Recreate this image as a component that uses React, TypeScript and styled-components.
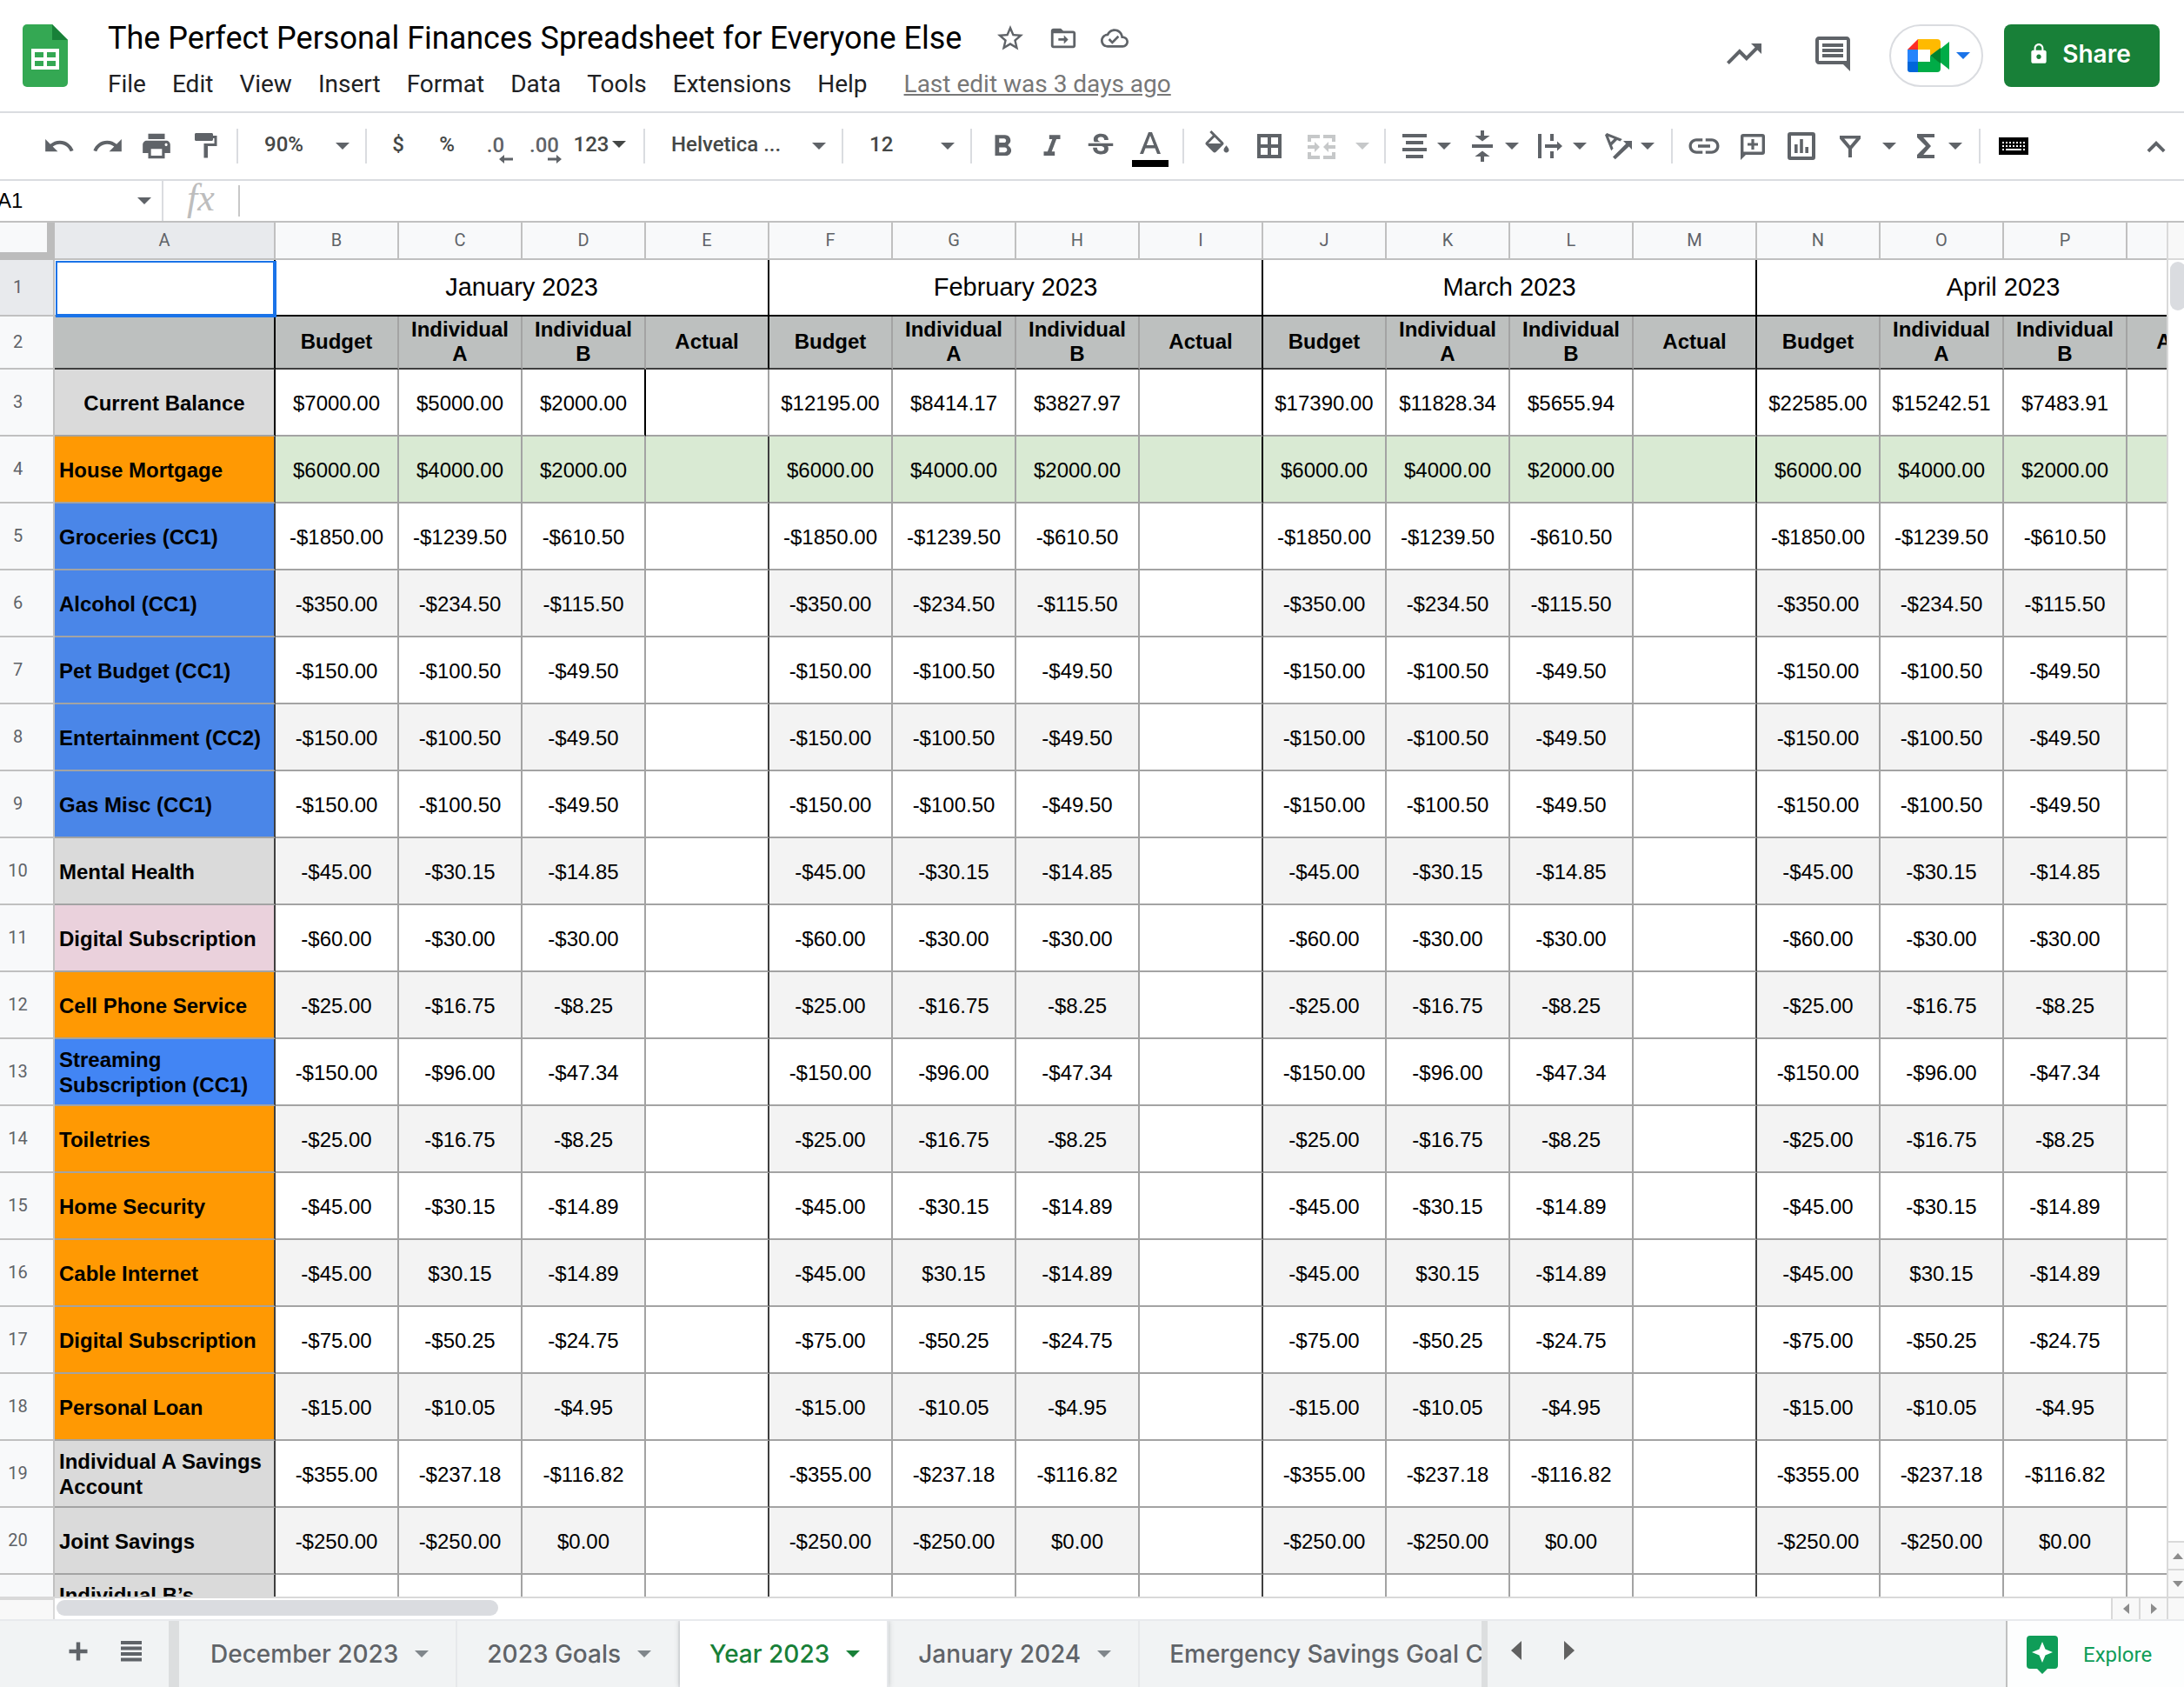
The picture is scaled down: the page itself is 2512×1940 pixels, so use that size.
import React from 'react';
import styled, { createGlobalStyle, css } from 'styled-components';

const sans = '"Liberation Sans", Arial, sans-serif';
const ui = 'Roboto, "Liberation Sans", sans-serif';
const display = 'Inter, Roboto, sans-serif';
const ink = '#5f6368';
const line = '#a3a3a3';
const headLine = '#c0c0c0';
const softLine = '#d9d9d9';

const GlobalStyle = createGlobalStyle`
  *, *::before, *::after { box-sizing: border-box; }
  body { margin: 0; background: #fff; color: #000; font-family: ${ui}; }
  button, input, select { font: inherit; color: inherit; border: 0; padding: 0; margin: 0; background: none; }
  svg { display: block; flex: none; }
`;

const Page = styled.div`
  display: flex;
  flex-direction: column;
  height: 100vh;
  overflow: hidden;
`;

/* ---------- header ---------- */

const Header = styled.header`
  display: flex;
  align-items: flex-start;
  height: 130px;
  padding: 0 28px 0 26px;
  border-bottom: 2px solid #dadce0;
`;

const LogoLink = styled.a`
  flex: none;
  margin-top: 28px;
`;

const Titles = styled.div`
  flex: 1;
  min-width: 0;
  padding: 22px 0 0 46px;
`;

const TitleRow = styled.div`
  display: flex;
  align-items: center;
  height: 44px;
`;

const Title = styled.h1`
  margin: 0;
  font: 400 36px/44px ${ui};
  white-space: nowrap;
`;

const TitleIcons = styled.div`
  display: flex;
  gap: 26px;
  margin-left: 38px;
  color: ${ink};
`;

const IconButton = styled.button`
  display: flex;
  align-items: center;
  justify-content: center;
  color: ${ink};
`;

const MenuBar = styled.nav`
  display: flex;
  align-items: center;
  gap: 30px;
  height: 40px;
  margin-top: 11px;
  font-size: 28px;
  line-height: 40px;
  color: #202124;
  white-space: nowrap;
`;

const LastEdit = styled.a`
  margin-left: 12px;
  color: #777;
  text-decoration: underline;
`;

const HeaderActions = styled.div`
  display: flex;
  align-items: center;
  height: 72px;
  margin-top: 28px;
`;

const ActionIcon = styled(IconButton)`
  width: 48px;
  height: 48px;
  margin: 0 54px 4px 0;

  & + & { margin-right: 41px; }
`;

const MeetButton = styled.button`
  display: flex;
  align-items: center;
  justify-content: center;
  gap: 8px;
  width: 108px;
  height: 72px;
  margin-right: 24px;
  padding-left: 6px;
  border: 2px solid #dadce0;
  border-radius: 36px;
  color: #1a73e8;
`;

const ShareButton = styled.button`
  display: flex;
  align-items: center;
  justify-content: center;
  gap: 14px;
  width: 179px;
  height: 72px;
  padding: 0 6px 4px 0;
  border-radius: 8px;
  background: #188038;
  color: #fff;
  font: 600 28px/36px ${display};
`;

/* ---------- toolbar ---------- */

const Toolbar = styled.div`
  display: flex;
  align-items: center;
  height: 78px;
  padding: 0 4px 0 40px;
  border-bottom: 2px solid #dadce0;
  color: ${ink};
`;

const Tool = styled(IconButton)<{ $w?: number; $push?: boolean; $dim?: boolean }>`
  flex: none;
  width: ${(p) => p.$w ?? 56}px;
  height: 56px;
  font: 500 24px/28px ${ui};
  ${(p) => p.$push && css`margin-left: auto;`}
  ${(p) => p.$dim && css`opacity: 0.35;`}
`;

const TextTool = styled(Tool)`
  gap: 4px;
  padding-bottom: 4px;
  color: #444746;
`;

const FormatTool = styled(TextTool)`
  padding-right: 6px;
`;

const DecimalTool = styled(Tool)`
  flex-direction: column;
  color: ${ink};
  line-height: 22px;
  padding-top: 8px;

  svg { align-self: flex-end; margin-right: 8px; }
`;

const GroupTool = styled.button<{ $gap?: number }>`
  display: flex;
  flex: none;
  align-items: center;
  gap: ${(p) => p.$gap ?? 8}px;
  width: 78px;
  height: 56px;
  padding-left: 7px;
  color: ${ink};
`;

const Divider = styled.span`
  flex: none;
  width: 2px;
  height: 40px;
  margin: 0 8px;
  background: #dadce0;
`;

const Picker = styled.label<{ $w: number }>`
  display: flex;
  flex: none;
  align-items: center;
  width: ${(p) => p.$w}px;
  height: 56px;
  padding: 0 10px 0 22px;

  select {
    flex: 1;
    min-width: 0;
    height: 36px;
    margin-bottom: 4px;
    appearance: none;
    font: 500 24px/36px ${ui};
    color: #444746;
  }
`;

/* ---------- formula bar ---------- */

const FormulaBar = styled.div`
  display: flex;
  align-items: center;
  height: 48px;
  border-bottom: 2px solid ${headLine};
`;

const NameBox = styled.label`
  display: flex;
  align-items: center;
  width: 188px;
  height: 46px;
  padding-right: 12px;
  border-right: 2px solid #dadce0;
  color: ${ink};

  input {
    flex: 1;
    min-width: 0;
    text-indent: -3px;
    font: 400 24px/28px ${sans};
    color: #000;
  }
`;

const Fx = styled.span`
  width: 88px;
  padding-bottom: 6px;
  border-right: 2px solid #c8c8c8;
  font: italic 400 44px/30px "Liberation Serif", serif;
  text-align: center;
  color: #bdbdbd;
`;

const FormulaInput = styled.input`
  flex: 1;
  height: 40px;
  outline: 0;
  font: 400 24px/28px ${sans};
`;

/* ---------- grid ---------- */

const Workspace = styled.main`
  display: grid;
  grid-template-columns: minmax(0, 1fr) 20px;
  grid-template-rows: minmax(0, 1fr) 26px;
  flex: 1;
  min-height: 0;
`;

const Viewport = styled.div`
  overflow: hidden;
`;

const Sheet = styled.table`
  width: 2588px;
  table-layout: fixed;
  border-collapse: separate;
  border-spacing: 0;
  font-family: ${sans};
`;

const Corner = styled.td`
  padding: 0;
  height: 43px;
  background: #f8f9fa;
  border-right: 9px solid #bcbcbc;
  border-bottom: 9px solid #bcbcbc;
`;

const ColHead = styled.th<{ $on?: boolean }>`
  height: 43px;
  padding: 0 0 2px;
  border-right: 2px solid ${headLine};
  border-bottom: 2px solid ${headLine};
  background: ${(p) => (p.$on ? '#e8eaed' : '#f8f9fa')};
  color: ${ink};
  font: 400 20px/24px ${ui};
`;

const RowHead = styled.th<{ $on?: boolean }>`
  padding: 0 20px 2px 0;
  border-right: 2px solid ${headLine};
  border-bottom: 2px solid ${headLine};
  background: ${(p) => (p.$on ? '#e8eaed' : '#f8f9fa')};
  color: ${ink};
  font: 400 20px/24px ${ui};
`;

const Row = styled.tr<{ $h: number }>`
  height: ${(p) => p.$h}px;
`;

const Cell = styled.td<{ $bg?: string; $right?: string; $bottom?: string }>`
  padding: 2px 0 0;
  border-right: 2px solid ${(p) => p.$right ?? line};
  border-bottom: 2px solid ${(p) => p.$bottom ?? line};
  background: ${(p) => p.$bg ?? '#fff'};
  font-size: 24px;
  line-height: 29px;
  text-align: center;
  white-space: nowrap;
`;

const MonthCell = styled(Cell)`
  padding: 0 0 2px;
  font-size: 29px;
  line-height: 34px;
`;

const HeadCell = styled(Cell)`
  padding: 0 12px 1px;
  font-weight: 700;
  line-height: 28px;
  white-space: normal;
`;

const LabelCell = styled(Cell)<{ $center?: boolean }>`
  padding: 1px 5px 0;
  font-weight: 700;
  text-align: ${(p) => (p.$center ? 'center' : 'left')};
  white-space: normal;
`;

const ClippedLabel = styled(LabelCell)`
  padding-top: 9px;
  vertical-align: top;
`;

const ActiveCell = styled(Cell)`
  position: relative;

  &::after {
    content: '';
    position: absolute;
    inset: 1px -3px -3px 1px;
    border: solid #1a73e8;
    border-width: 2px 4px 4px 2px;
    z-index: 1;
  }
`;

/* ---------- scroll bars ---------- */

const VScroll = styled.div`
  display: flex;
  flex-direction: column;
  border-left: 2px solid ${softLine};
  overflow: hidden;
`;

const VHead = styled.div`
  flex: none;
  height: 43px;
  background: #f8f8f8;
  border-bottom: 2px solid ${softLine};
`;

const VTrack = styled.div`
  flex: 1;
  padding: 2px 0 0 2px;
`;

const VThumb = styled.div`
  width: 18px;
  height: 56px;
  border-radius: 9px;
  background: #dadce0;
`;

const StepButton = styled.button<{ $side?: boolean }>`
  display: flex;
  flex: none;
  align-items: center;
  justify-content: center;
  width: ${(p) => (p.$side ? '32px' : '100%')};
  height: ${(p) => (p.$side ? '100%' : '32px')};
  padding-left: ${(p) => (p.$side ? 0 : 4)}px;
  border: solid ${softLine};
  border-width: ${(p) => (p.$side ? '0 0 0 2px' : '2px 0 0')};
  background: #f8f8f8;
  color: #8c8c8c;
`;

const HScroll = styled.div`
  display: flex;
  border-top: 2px solid ${softLine};
`;

const HCorner = styled.div`
  flex: none;
  width: 63px;
  border-top: 2px solid ${softLine};
  border-right: 2px solid ${softLine};
  background: #f8f8f8;
`;

const HTrack = styled.div`
  flex: 1;
  padding: 2px;
`;

const HThumb = styled.div`
  width: 508px;
  height: 18px;
  border-radius: 9px;
  background: #dadce0;
`;

const ScrollCorner = styled.div`
  border: solid ${softLine};
  border-width: 2px 0 0 2px;
  background: #f8f8f8;
`;

/* ---------- sheet tabs ---------- */

const TabBar = styled.footer`
  display: flex;
  height: 78px;
  border-top: 2px solid #e8eaed;
  background: #f1f3f4;
`;

const TabTools = styled.div`
  display: flex;
  flex: none;
  align-items: center;
  gap: 31px;
  width: 194px;
  padding: 0 0 6px 72px;
`;

const Tabs = styled.div`
  display: flex;
  flex: none;
  width: 1517px;
  padding-left: 2px;
  overflow: hidden;
  border: solid #dcdedf;
  border-width: 0 7px 0 12px;
`;

const Tab = styled.button<{ $on?: boolean }>`
  display: flex;
  flex: none;
  align-items: center;
  gap: 19px;
  padding: 0 31px 0 34px;
  border-right: 2px solid #e6e8eb;
  font: 500 28px/36px ${display};
  white-space: nowrap;
  color: ${(p) => (p.$on ? '#188038' : ink)};
  background: ${(p) => (p.$on ? '#fff' : 'transparent')};
  ${(p) => p.$on && css`box-shadow: 0 0 6px rgba(60, 64, 67, 0.3);`}

  svg { color: ${(p) => (p.$on ? '#188038' : '#80868b')}; }
`;

const TabArrows = styled.div`
  display: flex;
  flex: 1;
  align-items: center;
  gap: 49px;
  padding: 0 0 8px 27px;

  button { color: #616161; }
`;

const Explore = styled.button`
  display: flex;
  flex: none;
  align-items: center;
  gap: 29px;
  width: 205px;
  padding: 2px 0 0 22px;
  border-left: 2px solid ${headLine};
  background: #fdfefe;
  color: #0f9d58;
  font: 400 24px/28px ${ui};
`;

/* ---------- icons ---------- */

const Icon = ({ d, size = 36, grid = 24 }: { d: string; size?: number; grid?: number }) => (
  <svg width={size} height={size} viewBox={`0 0 ${grid} ${grid}`} fill="currentColor" aria-hidden="true">
    <path d={d} fillRule="evenodd" />
  </svg>
);

const Caret = () => (
  <svg width="16" height="8" viewBox="0 0 16 8" fill="currentColor" aria-hidden="true">
    <path d="M0 0h16L8 8z" />
  </svg>
);

const paths = {
  star: 'M22 9.24l-7.19-.62L12 2 9.19 8.63 2 9.24l5.46 4.73L5.82 21 12 17.27 18.18 21l-1.63-7.03L22 9.24zM12 15.4l-3.76 2.27 1-4.28-3.32-2.88 4.38-.38L12 6.1l1.71 4.04 4.38.38-3.32 2.88 1 4.28L12 15.4z',
  folder: 'M20 6h-8l-2-2H4c-1.1 0-2 .9-2 2v12c0 1.100.9 2 2 2h16c1.100 0 2-.9 2-2V8c0-1.100-.9-2-2-2zm0 12H4V8h16v10zM12.500 9.500l3.500 3.500-3.500 3.500v-2.500H8v-2h4.500z',
  cloud: 'M19.350 10.040C18.670 6.590 15.640 4 12 4 9.110 4 6.600 5.640 5.350 8.040 2.340 8.360 0 10.910 0 14c0 3.310 2.690 6 6 6h13c2.760 0 5-2.240 5-5 0-2.640-2.050-4.780-4.650-4.960zM19 18H6c-2.210 0-4-1.790-4-4 0-2.050 1.530-3.760 3.560-3.970l1.070-.11.5-.95C8.080 7.140 9.940 6 12 6c2.620 0 4.880 1.860 5.390 4.430l.3 1.500 1.530.11c1.560.1 2.780 1.410 2.780 2.960 0 1.650-1.350 3-3 3zm-9-3.820l-2.090-2.090L6.500 13.500 10 17l6.010-6.010-1.410-1.410z',
  trend: 'M16 6l2.290 2.290-4.880 4.880-4-4L2 16.590 3.410 18l6-6 4 4 6.300-6.290L22 12V6z',
  comment: 'M21.990 4c0-1.100-.89-2-1.990-2H4c-1.100 0-2 .9-2 2v12c0 1.100.9 2 2 2h14l4 4-.01-18zM20 4v12H4V4h16zM6 12h12v2H6zM6 9h12v2H6zM6 6h12v2H6z',
  lock: 'M18 8h-1V6c0-2.760-2.240-5-5-5S7 3.240 7 6v2H6c-1.100 0-2 .9-2 2v10c0 1.100.9 2 2 2h12c1.100 0 2-.9 2-2V10c0-1.100-.9-2-2-2zm-6 9.500c-1.400 0-2.500-1.100-2.500-2.500s1.100-2.500 2.500-2.500 2.500 1.100 2.500 2.500-1.100 2.500-2.500 2.500zM15.100 8H8.900V6c0-1.710 1.390-3.100 3.100-3.100s3.100 1.390 3.100 3.100v2z',
  undo: 'M12.500 8c-2.650 0-5.050.99-6.900 2.600L2 7v9h9l-3.620-3.620c1.390-1.160 3.160-1.880 5.120-1.880 3.540 0 6.550 2.310 7.600 5.500l2.370-.78C21.080 11.030 17.150 8 12.500 8z',
  redo: 'M18.400 10.600C16.550 8.990 14.150 8 11.500 8c-4.650 0-8.580 3.030-9.960 7.220L3.900 16c1.050-3.190 4.050-5.500 7.600-5.500 1.950 0 3.730.72 5.120 1.880L13 16h9V7l-3.600 3.600z',
  print: 'M19 8H5c-1.660 0-3 1.340-3 3v6h4v4h12v-4h4v-6c0-1.660-1.340-3-3-3zm-3 11H8v-5h8v5zm3-7c-.55 0-1-.45-1-1s.45-1 1-1 1 .45 1 1-.45 1-1 1zm-1-9H6v4h12V3z',
  paint: 'M18 4V3c0-.55-.45-1-1-1H5c-.55 0-1 .45-1 1v4c0 .55.45 1 1 1h12c.55 0 1-.45 1-1V6h1v4h-8v11h3v-9h7V4h-3z',
  bold: 'M15.600 10.790c.97-.67 1.650-1.770 1.650-2.790 0-2.260-1.750-4-4-4H6v15h8.040c2.090 0 3.710-1.700 3.710-3.790 0-1.520-.86-2.820-2.150-3.420zM9 6.500h3.500c.83 0 1.500.67 1.500 1.500s-.67 1.500-1.500 1.500H9v-3zm4 10H9v-3.500h4c.97 0 1.750.78 1.750 1.750S13.970 16.500 13 16.500z',
  italic: 'M10 4v3h2.210l-3.420 9H6v3h8v-3h-2.210l3.420-9H18V4z',
  strike: 'M7.240 8.750c-.26-.48-.39-1.030-.39-1.670 0-.61.13-1.160.4-1.670.26-.5.63-.93 1.110-1.290.48-.35 1.050-.63 1.700-.83.66-.19 1.390-.29 2.180-.29.81 0 1.540.11 2.210.34.66.22 1.230.54 1.690.94.47.4.83.88 1.080 1.430s.38 1.150.38 1.810h-3.010c0-.31-.05-.59-.15-.85-.09-.27-.24-.49-.44-.68-.2-.19-.45-.33-.75-.44-.3-.1-.66-.16-1.060-.16-.39 0-.74.04-1.030.13s-.53.21-.72.36c-.19.16-.34.34-.44.55-.1.21-.15.43-.15.66 0 .48.25.88.74 1.210.38.25.77.48 1.410.7H7.390c-.05-.08-.11-.17-.15-.25zM21 12v-2H3v2h9.620c.18.07.4.14.55.2.37.17.66.34.87.51s.35.36.43.57c.07.2.11.43.11.69 0 .23-.05.45-.14.66-.09.2-.23.38-.42.53-.19.15-.42.26-.71.35-.29.08-.63.13-1.010.13-.43 0-.83-.04-1.180-.13s-.66-.23-.91-.42c-.25-.19-.45-.44-.59-.75s-.25-.76-.25-1.210H6.400c0 .55.08 1.130.24 1.580s.37.85.65 1.210c.28.35.6.66.98.92.37.26.78.48 1.220.65.44.17.9.3 1.380.39.48.08.96.13 1.440.13.8 0 1.530-.09 2.180-.28s1.210-.45 1.670-.79c.46-.34.82-.77 1.070-1.270s.38-1.070.38-1.710c0-.6-.1-1.140-.31-1.610-.05-.11-.11-.23-.17-.33H21z',
  fill: 'M16.560 8.940L7.620 0 6.210 1.410l2.380 2.380-5.150 5.150c-.59.59-.59 1.540 0 2.120l5.500 5.500c.29.29.68.44 1.060.44s.77-.15 1.060-.44l5.500-5.500c.59-.58.59-1.530 0-2.120zM5.210 10L10 5.210 14.790 10H5.210zM19 11.500s-2 2.170-2 3.500c0 1.100.9 2 2 2s2-.9 2-2c0-1.330-2-3.500-2-3.500z',
  link: 'M3.900 12c0-1.710 1.390-3.100 3.100-3.100h4V7H7c-2.760 0-5 2.240-5 5s2.240 5 5 5h4v-1.900H7c-1.710 0-3.100-1.390-3.100-3.100zM8 13h8v-2H8v2zm9-6h-4v1.900h4c1.710 0 3.100 1.390 3.100 3.100s-1.390 3.100-3.100 3.100h-4V17h4c2.760 0 5-2.240 5-5s-2.240-5-5-5z',
  chevron: 'M12 8l-7 7 1.800 1.800L12 11.600l5.200 5.200L19 15z',
};

/* drawn on an 18-unit grid */
const small = {
  borders: 'M2 2h14v14H2zM4 4v4h4V4zM10 4v4h4V4zM4 10v4h4v-4zM10 10v4h4v-4z',
  merge: 'M1 2.500h7v2H3v2H1zM10 2.500h7v4h-2v-2h-5zM1 12.500h2v2h5v2H1zM15 12.500h2v4h-7v-2h5zM1 8.500h4v-2l3 3-3 3v-2H1zM17 8.500h-4v-2l-3 3 3 3v-2h4z',
  align: 'M2 2h14v2H2zM4 6h10v2H4zM2 10h14v2H2zM4 14h10v2H4z',
  valign: 'M8 0h2v3h3.300L9 6.300 4.700 3H8zM3 8h12v2H3zM9 11.700l4.300 3.300H10v3H8v-3H4.700z',
  wrap: 'M2 2h2v14H2zM9 2h2v4H9zM9 12h2v4H9zM6 8h7V6.200L16 9l-3 2.800V10H6z',
  rotate: 'M1.500 2.600L2.600 1.500 11.400 5l-1.200 1.200-1.700-.7-3 3 .8 1.900L5.100 11.600zM3.500 3.500l1.300 3.300 2-2zM6 15.200L13.600 7.600 12 6h5v5l-1.700-1.700-7.900 7.300z',
  addComment: 'M3.500 2h11A1.500 1.500 0 0 1 16 3.500v9a1.500 1.500 0 0 1-1.500 1.500H5l-3 3V3.500A1.500 1.500 0 0 1 3.500 2zM3.700 3.700v8.600h10.600V3.700zM8.200 5h1.600v2.200H12v1.600H9.800V11H8.200V8.800H6V7.200h2.200z',
  chart: 'M2.500 1h13A1.500 1.500 0 0 1 17 2.500v13a1.500 1.500 0 0 1-1.500 1.500h-13A1.500 1.500 0 0 1 1 15.500v-13A1.500 1.500 0 0 1 2.500 1zM3 3v12h12V3zM5 8h1.800v5H5zM8.100 5h1.800v8H8.100zM11.200 9.500H13V13h-1.800z',
  filter: 'M3 3h12v1.800L10 10.600V15.500H8v-4.900L3 4.800zM5.600 4.800L9 8.800l3.400-4z',
  sigma: 'M4 2h10v2H7.600L12 9l-4.400 5H14v2H4v-2l5-5-5-5z',
};

const Logo = () => (
  <svg width="52" height="72" viewBox="0 0 52 72" aria-hidden="true">
    <path fill="#34a853" d="M5 0h29l18 18v49a5 5 0 0 1-5 5H5a5 5 0 0 1-5-5V5a5 5 0 0 1 5-5z" />
    <path fill="#188038" d="M34 0l18 18H34z" />
    <path fill="#fff" fillRule="evenodd" d="M10 28h32v24H10zM14 32v6h10v-6zM28 32v6h10v-6zM14 42v6h10v-6zM28 42v6h10v-6z" />
  </svg>
);

const Meet = () => (
  <svg width="48" height="38" viewBox="0 0 48 38" aria-hidden="true">
    <path fill="#ff2d25" d="M12 0L0 12h12z" />
    <path fill="#2684fc" d="M0 12h12v14H0z" />
    <path fill="#0066da" d="M0 26h12v12H3a3 3 0 0 1-3-3z" />
    <path fill="#ffba00" d="M12 0h22a4 4 0 0 1 4 4v7l-12 8v-7H12z" />
    <path fill="#00ac47" d="M12 26h14v-7l12 8v7a4 4 0 0 1-4 4H12zM38 11l10-8v32l-10-8z" />
    <path fill="#00832d" d="M26 19l12-9v18z" />
  </svg>
);

const Keyboard = () => (
  <svg width="34" height="20" viewBox="0 0 34 20" aria-hidden="true">
    <path fill="#000" d="M0 0h34v20H0z" />
    <path stroke="#fff" strokeWidth="2" strokeDasharray="2 2" d="M4 6h26M4 10h26" />
    <path stroke="#fff" strokeWidth="2" d="M4 14h2M8 14h18M28 14h2" />
  </svg>
);

const ArrowStub = ({ left }: { left?: boolean }) => (
  <svg width="16" height="10" viewBox="0 0 16 10" fill="currentColor" aria-hidden="true">
    <path d={left ? 'M0 5l6-5v3.500h10v3H6V10z' : 'M16 5l-6-5v3.500H0v3h10V10z'} />
  </svg>
);

const Tri = ({ dir, w, h }: { dir: 'up' | 'down' | 'left' | 'right'; w: number; h: number }) => {
  const d = {
    up: `M0 ${h}h${w}L${w / 2} 0z`,
    down: `M0 0h${w}L${w / 2} ${h}z`,
    left: `M${w} 0v${h}L0 ${h / 2}z`,
    right: `M0 0v${h}L${w} ${h / 2}z`,
  }[dir];
  return (
    <svg width={w} height={h} viewBox={`0 0 ${w} ${h}`} fill="currentColor" aria-hidden="true">
      <path d={d} />
    </svg>
  );
};

/* ---------- data ---------- */

const menus = ['File', 'Edit', 'View', 'Insert', 'Format', 'Data', 'Tools', 'Extensions', 'Help'];
const columns = 'ABCDEFGHIJKLMNOPQ'.split('');
const months = ['January 2023', 'February 2023', 'March 2023', 'April 2023'];
const balances = [
  ['$7000.00', '$5000.00', '$2000.00'],
  ['$12195.00', '$8414.17', '$3827.97'],
  ['$17390.00', '$11828.34', '$5655.94'],
  ['$22585.00', '$15242.51', '$7483.91'],
];

const orange = '#ff9903';
const blue = '#4a86e8';
const gray = '#dadada';

const rows: { label: string; bg: string; values: string[] }[] = [
  { label: 'House Mortgage', bg: orange, values: ['$6000.00', '$4000.00', '$2000.00'] },
  { label: 'Groceries (CC1)', bg: blue, values: ['-$1850.00', '-$1239.50', '-$610.50'] },
  { label: 'Alcohol (CC1)', bg: blue, values: ['-$350.00', '-$234.50', '-$115.50'] },
  { label: 'Pet Budget (CC1)', bg: blue, values: ['-$150.00', '-$100.50', '-$49.50'] },
  { label: 'Entertainment (CC2)', bg: blue, values: ['-$150.00', '-$100.50', '-$49.50'] },
  { label: 'Gas Misc (CC1)', bg: blue, values: ['-$150.00', '-$100.50', '-$49.50'] },
  { label: 'Mental Health', bg: gray, values: ['-$45.00', '-$30.15', '-$14.85'] },
  { label: 'Digital Subscription', bg: '#ead1dc', values: ['-$60.00', '-$30.00', '-$30.00'] },
  { label: 'Cell Phone Service', bg: orange, values: ['-$25.00', '-$16.75', '-$8.25'] },
  { label: 'Streaming Subscription (CC1)', bg: '#4285f4', values: ['-$150.00', '-$96.00', '-$47.34'] },
  { label: 'Toiletries', bg: orange, values: ['-$25.00', '-$16.75', '-$8.25'] },
  { label: 'Home Security', bg: orange, values: ['-$45.00', '-$30.15', '-$14.89'] },
  { label: 'Cable Internet', bg: orange, values: ['-$45.00', '$30.15', '-$14.89'] },
  { label: 'Digital Subscription', bg: orange, values: ['-$75.00', '-$50.25', '-$24.75'] },
  { label: 'Personal Loan', bg: orange, values: ['-$15.00', '-$10.05', '-$4.95'] },
  { label: 'Individual A Savings Account', bg: gray, values: ['-$355.00', '-$237.18', '-$116.82'] },
  { label: 'Joint Savings', bg: gray, values: ['-$250.00', '-$250.00', '$0.00'] },
];

const dark = '#3f3f3f';

const Grid = () => (
  <Sheet>
    <colgroup>
      <col style={{ width: 63 }} />
      <col style={{ width: 254 }} />
      {columns.slice(1).map((c) => (
        <col key={c} style={{ width: 142 }} />
      ))}
    </colgroup>
    <thead>
      <tr>
        <Corner />
        {columns.map((c) => (
          <ColHead key={c} scope="col" $on={c === 'A'}>{c}</ColHead>
        ))}
      </tr>
    </thead>
    <tbody>
      <Row $h={65}>
        <RowHead scope="row" $on>1</RowHead>
        <ActiveCell $right="#000" />
        {months.map((m) => (
          <MonthCell key={m} colSpan={4} $right="#000" $bottom="#000">{m}</MonthCell>
        ))}
      </Row>
      <Row $h={61}>
        <RowHead scope="row">2</RowHead>
        <HeadCell $bg="#bdc0bf" $right="#000" $bottom={dark} />
        {months.map((m) =>
          ['Budget', 'Individual A', 'Individual B', 'Actual'].map((h, i) => (
            <HeadCell key={m + h} $bg="#bdc0bf" $right={i === 3 ? '#000' : undefined} $bottom={dark}>{h}</HeadCell>
          )),
        )}
      </Row>
      <Row $h={77}>
        <RowHead scope="row">3</RowHead>
        <LabelCell $center $bg={gray} $right="#000">Current Balance</LabelCell>
        {balances.map((b, m) =>
          [...b, ''].map((v, i) => (
            <Cell key={m + '-' + i} $right={(m === 0 && i === 2) || (m > 0 && i === 3) ? '#000' : undefined}>{v}</Cell>
          )),
        )}
      </Row>
      {rows.map((r, n) => (
        <Row key={n} $h={77}>
          <RowHead scope="row">{n + 4}</RowHead>
          <LabelCell $bg={r.bg} $right={dark}>{r.label}</LabelCell>
          {months.map((m, k) =>
            [...r.values, ''].map((v, i) => (
              <Cell
                key={m + i}
                $bg={n === 0 ? '#d9ead3' : n % 2 === 0 && i < 3 ? '#f3f3f3' : '#fff'}
                $right={i < 3 ? undefined : n === 0 && k > 0 ? '#000' : dark}
              >
                {v}
              </Cell>
            )),
          )}
        </Row>
      ))}
      <Row $h={77}>
        <RowHead scope="row" />
        <ClippedLabel $bg={gray} $right={dark}>Individual B’s</ClippedLabel>
        {months.map((m) =>
          [0, 1, 2, 3].map((i) => <Cell key={m + i} $right={i === 3 ? dark : undefined} />),
        )}
      </Row>
    </tbody>
  </Sheet>
);

export default function App() {
  return (
    <Page>
      <GlobalStyle />
      <Header>
        <LogoLink href="#" aria-label="Sheets home"><Logo /></LogoLink>
        <Titles>
          <TitleRow>
            <Title>The Perfect Personal Finances Spreadsheet for Everyone Else</Title>
            <TitleIcons>
              <IconButton aria-label="Star"><Icon d={paths.star} /></IconButton>
              <IconButton aria-label="Move"><Icon d={paths.folder} size={34} /></IconButton>
              <IconButton aria-label="Document status"><Icon d={paths.cloud} size={32} /></IconButton>
            </TitleIcons>
          </TitleRow>
          <MenuBar>
            {menus.map((m) => <button key={m}>{m}</button>)}
            <LastEdit href="#">Last edit was 3 days ago</LastEdit>
          </MenuBar>
        </Titles>
        <HeaderActions>
          <ActionIcon aria-label="Activity"><Icon d={paths.trend} size={48} /></ActionIcon>
          <ActionIcon aria-label="Comments"><Icon d={paths.comment} size={48} /></ActionIcon>
          <MeetButton aria-label="Meet"><Meet /><Caret /></MeetButton>
          <ShareButton><Icon d={paths.lock} size={26} />Share</ShareButton>
        </HeaderActions>
      </Header>

      <Toolbar role="toolbar">
        <Tool aria-label="Undo"><Icon d={paths.undo} size={38} /></Tool>
        <Tool aria-label="Redo"><Icon d={paths.redo} size={38} /></Tool>
        <Tool aria-label="Print"><Icon d={paths.print} size={38} /></Tool>
        <Tool aria-label="Paint format"><Icon d={paths.paint} /></Tool>
        <Divider />
        <Picker $w={130}>
          <select aria-label="Zoom"><option>90%</option></select><Caret />
        </Picker>
        <Divider />
        <TextTool>$</TextTool>
        <TextTool>%</TextTool>
        <DecimalTool aria-label="Decrease decimal places">.0<ArrowStub left /></DecimalTool>
        <DecimalTool aria-label="Increase decimal places">.00<ArrowStub /></DecimalTool>
        <FormatTool $w={78}>123<Caret /></FormatTool>
        <Divider />
        <Picker $w={210}>
          <select aria-label="Font"><option>Helvetica ...</option></select><Caret />
        </Picker>
        <Divider />
        <Picker $w={130}>
          <select aria-label="Font size"><option>12</option></select><Caret />
        </Picker>
        <Divider />
        <Tool aria-label="Bold"><Icon d={paths.bold} size={38} /></Tool>
        <Tool aria-label="Italic"><Icon d={paths.italic} size={38} /></Tool>
        <Tool aria-label="Strikethrough"><Icon d={paths.strike} size={38} /></Tool>
        <Tool $w={58} aria-label="Text color">
          <svg width="42" height="48" viewBox="0 0 42 48" aria-hidden="true">
            <path fill={ink} fillRule="evenodd" d="M19 8h4l10 25h-4l-2.500-6.500h-11L13 33H9zM16.800 23h8.400L21 12z" />
            <path fill="#000" d="M0 40h42v8H0z" />
          </svg>
        </Tool>
        <Divider />
        <Tool $w={60} aria-label="Fill color"><Icon d={paths.fill} /></Tool>
        <Tool $w={60} aria-label="Borders"><Icon d={small.borders} grid={18} /></Tool>
        <Tool $w={60} $dim aria-label="Merge cells"><Icon d={small.merge} grid={18} /></Tool>
        <Tool $w={34} $dim aria-label="Merge type"><Caret /></Tool>
        <Divider />
        <GroupTool aria-label="Horizontal align"><Icon d={small.align} grid={18} /><Caret /></GroupTool>
        <GroupTool aria-label="Vertical align"><Icon d={small.valign} grid={18} /><Caret /></GroupTool>
        <GroupTool aria-label="Text wrapping"><Icon d={small.wrap} grid={18} /><Caret /></GroupTool>
        <GroupTool aria-label="Text rotation"><Icon d={small.rotate} grid={18} /><Caret /></GroupTool>
        <Divider />
        <Tool aria-label="Insert link"><Icon d={paths.link} size={42} /></Tool>
        <Tool aria-label="Insert comment"><Icon d={small.addComment} grid={18} /></Tool>
        <Tool aria-label="Insert chart"><Icon d={small.chart} grid={18} /></Tool>
        <Tool aria-label="Filter"><Icon d={small.filter} grid={18} /></Tool>
        <Tool $w={34} aria-label="Filter views"><Caret /></Tool>
        <GroupTool aria-label="Functions"><Icon d={small.sigma} grid={18} /><Caret /></GroupTool>
        <Divider />
        <Tool $w={60} aria-label="Input tools"><Keyboard /></Tool>
        <Tool $push aria-label="Hide the menus"><Icon d={paths.chevron} /></Tool>
      </Toolbar>

      <FormulaBar>
        <NameBox><input aria-label="Name box" defaultValue="A1" /><Caret /></NameBox>
        <Fx>fx</Fx>
        <FormulaInput aria-label="Formula" />
      </FormulaBar>

      <Workspace>
        <Viewport><Grid /></Viewport>
        <VScroll>
          <VHead />
          <VTrack><VThumb /></VTrack>
          <StepButton aria-label="Scroll up"><Tri dir="up" w={12} h={7} /></StepButton>
          <StepButton aria-label="Scroll down"><Tri dir="down" w={12} h={7} /></StepButton>
        </VScroll>
        <HScroll>
          <HCorner />
          <HTrack><HThumb /></HTrack>
          <StepButton $side aria-label="Scroll left"><Tri dir="left" w={7} h={12} /></StepButton>
          <StepButton $side aria-label="Scroll right"><Tri dir="right" w={7} h={12} /></StepButton>
        </HScroll>
        <ScrollCorner />
      </Workspace>

      <TabBar>
        <TabTools>
          <IconButton aria-label="Add sheet"><Icon d="M10.500 5h3v5.500H19v3h-5.500V19h-3v-5.500H5v-3h5.500z" /></IconButton>
          <IconButton aria-label="All sheets"><Icon d="M0 0h24v4H0zM0 6.500h24v4H0zM0 13h24v4H0zM0 19.500h24v4H0z" size={24} /></IconButton>
        </TabTools>
        <Tabs>
          <Tab>December 2023<Caret /></Tab>
          <Tab>2023 Goals<Caret /></Tab>
          <Tab $on>Year 2023<Caret /></Tab>
          <Tab>January 2024<Caret /></Tab>
          <Tab>Emergency Savings Goal Calculator<Caret /></Tab>
        </Tabs>
        <TabArrows>
          <IconButton aria-label="Previous sheets"><Tri dir="left" w={12} h={22} /></IconButton>
          <IconButton aria-label="Next sheets"><Tri dir="right" w={12} h={22} /></IconButton>
        </TabArrows>
        <Explore>
          <svg width="36" height="44" viewBox="0 0 36 44" aria-hidden="true">
            <path fill="#0f9d58" d="M4 0h28a4 4 0 0 1 4 4v30a4 4 0 0 1-4 4h-8l-6 6-6-6H4a4 4 0 0 1-4-4V4a4 4 0 0 1 4-4z" />
            <path fill="#fff" d="M18 7l3.500 8.500L30 19l-8.500 3.500L18 31l-3.500-8.500L6 19l8.500-3.500z" />
          </svg>
          Explore
        </Explore>
      </TabBar>
    </Page>
  );
}
